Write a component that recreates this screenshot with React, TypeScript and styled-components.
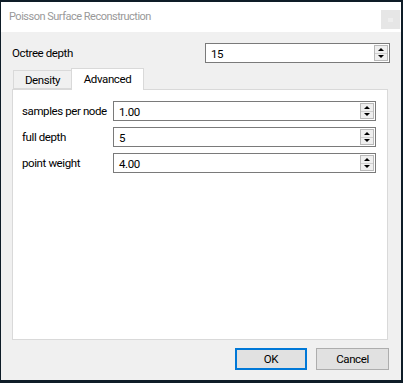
import React, { useState } from 'react';
import styled, { createGlobalStyle } from 'styled-components';

const GlobalStyle = createGlobalStyle`
  html, body {
    margin: 0;
    padding: 0;
    background: #0e1c27;
  }
  * {
    box-sizing: border-box;
  }
`;

const Frame = styled.div`
  width: 403px;
  height: 383px;
  padding: 2px 2px 3px 1px;
  background: #0e1c27;
  font-family: Roboto, "Liberation Sans", Arial, sans-serif;
  font-size: 11.5px;
  letter-spacing: -0.4px;
  color: #000;
`;

const Window = styled.div`
  width: 100%;
  height: 100%;
  display: flex;
  flex-direction: column;
  background: #f0f0f0;
`;

const TitleBar = styled.div`
  height: 30px;
  flex: none;
  display: flex;
  align-items: center;
  justify-content: space-between;
  background: #ffffff;
  padding: 0 1px 0 8px;
`;

const Title = styled.span`
  color: #999999;
  font-size: 11px;
  letter-spacing: -0.5px;
  padding-bottom: 1px;
`;

const CloseBox = styled.div`
  width: 19px;
  height: 19px;
  margin-top: 5px;
  background: #e6e6e6;
  display: flex;
  align-items: center;
  justify-content: center;
  &::after {
    content: '';
    width: 5px;
    height: 4px;
    background: #eeeeee;
  }
`;

const Body = styled.div`
  flex: 1;
  display: flex;
  flex-direction: column;
  padding: 11px 11px 10px 11px;
`;

const Row = styled.div<{ $labelWidth: number }>`
  display: grid;
  grid-template-columns: ${p => p.$labelWidth}px 1fr;
  align-items: center;
  height: 20px;
`;

const Label = styled.span`
  white-space: nowrap;
`;

const SpinBox = styled.div`
  height: 20px;
  display: flex;
  align-items: center;
  border: 1px solid #7a7a7a;
  background: #ffffff;
  padding: 0 1px 0 5px;
`;

const SpinValue = styled.span`
  flex: 1;
  padding-top: 1px;
`;

const SpinButtons = styled.div`
  width: 14px;
  height: 16px;
  display: flex;
  flex-direction: column;
  border: 1px solid #b9b9b9;
  background: #efefef;
`;

const SpinArrow = styled.div<{ $down?: boolean }>`
  flex: 1;
  display: flex;
  align-items: center;
  justify-content: center;
  border-top: ${p => (p.$down ? '1px solid #cfcfcf' : 'none')};
  &::before {
    content: '';
    width: 0;
    height: 0;
    border-left: 3px solid transparent;
    border-right: 3px solid transparent;
    ${p => (p.$down ? 'border-top: 3px solid #000;' : 'border-bottom: 3px solid #000;')}
  }
`;

const Tabs = styled.div`
  flex: 1;
  display: flex;
  flex-direction: column;
  margin: 5px 2px 0 0;
`;

const TabBar = styled.div`
  display: flex;
  align-items: flex-end;
  height: 21px;
  padding-left: 1px;
  position: relative;
  z-index: 1;
`;

const Tab = styled.div<{ $active?: boolean; $width: number }>`
  width: ${p => p.$width}px;
  height: ${p => (p.$active ? '22px' : '19px')};
  margin-bottom: ${p => (p.$active ? '-1px' : '0')};
  padding-bottom: ${p => (p.$active ? '2px' : '0')};
  display: flex;
  align-items: center;
  justify-content: center;
  background: ${p => (p.$active ? '#ffffff' : '#f0f0f0')};
  border: 1px solid #d9d9d9;
  border-bottom: ${p => (p.$active ? 'none' : '1px solid #d9d9d9')};
  margin-left: ${p => (p.$active ? '-1px' : '0')};
  cursor: default;
`;

const Pane = styled.div`
  flex: 1;
  background: #ffffff;
  border: 1px solid #d9d9d9;
  padding: 11px 11px 0 9px;
  display: flex;
  flex-direction: column;
  gap: 6px;
`;

const Footer = styled.div`
  display: flex;
  justify-content: flex-end;
  gap: 9px;
  margin-top: 8px;
  padding-right: 1px;
`;

const Button = styled.button<{ $default?: boolean }>`
  width: ${p => (p.$default ? '72px' : '73px')};
  height: 22px;
  font-family: inherit;
  font-size: inherit;
  letter-spacing: inherit;
  color: #000;
  background: #e1e1e1;
  border: ${p => (p.$default ? '2px solid #0078d7' : '1px solid #adadad')};
  padding: 0;
`;

const Spin: React.FC<{ value: string }> = ({ value }) => (
  <SpinBox>
    <SpinValue>{value}</SpinValue>
    <SpinButtons>
      <SpinArrow />
      <SpinArrow $down />
    </SpinButtons>
  </SpinBox>
);

const tabs = [
  { name: 'Density', width: 59 },
  { name: 'Advanced', width: 73 },
];

const advanced = [
  { label: 'samples per node', value: '1.00' },
  { label: 'full depth', value: '5' },
  { label: 'point weight', value: '4.00' },
];

export default function App() {
  const [tab, setTab] = useState('Advanced');

  return (
    <Frame>
      <GlobalStyle />
      <Window>
        <TitleBar>
          <Title>Poisson Surface Reconstruction</Title>
          <CloseBox />
        </TitleBar>
        <Body>
          <Row $labelWidth={193}>
            <Label>Octree depth</Label>
            <Spin value="15" />
          </Row>
          <Tabs>
            <TabBar>
              {tabs.map(t => (
                <Tab key={t.name} $width={t.width} $active={tab === t.name} onClick={() => setTab(t.name)}>
                  {t.name}
                </Tab>
              ))}
            </TabBar>
            <Pane>
              {tab === 'Advanced' &&
                advanced.map(item => (
                  <Row key={item.label} $labelWidth={91}>
                    <Label>{item.label}</Label>
                    <Spin value={item.value} />
                  </Row>
                ))}
            </Pane>
          </Tabs>
          <Footer>
            <Button $default>OK</Button>
            <Button>Cancel</Button>
          </Footer>
        </Body>
      </Window>
    </Frame>
  );
}
